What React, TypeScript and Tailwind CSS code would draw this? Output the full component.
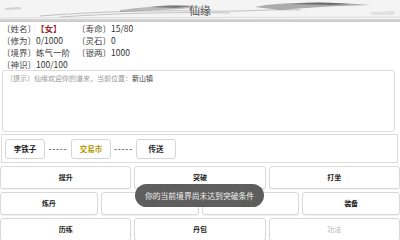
export default function App() {
  const Btn = ({ label, dim }: { label: string; dim?: boolean }) => (
    <div
      className={
        "flex items-center justify-center h-[23px] rounded-[3px] border border-[#d9d9d9] bg-white shadow-[0_1px_1px_rgba(0,0,0,0.06)] text-[7px] whitespace-nowrap " +
        (dim ? "text-[#b5b5b5]" : "font-bold text-[#222]")
      }
    >
      {label}
    </div>
  );
  const LocBtn = ({ label, gold }: { label: string; gold?: boolean }) => (
    <div
      className={
        "flex shrink-0 items-center justify-center w-[40px] h-[20px] rounded-[3px] border border-[#d6d6d6] bg-white text-[7.5px] font-bold whitespace-nowrap " +
        (gold ? "text-[#b59a00]" : "text-[#222]")
      }
    >
      {label}
    </div>
  );
  const Item = ({ k, v, red }: { k: string; v: string; red?: boolean }) => (
    <div className="flex whitespace-nowrap h-[12px] items-center">
      <span className="w-[34px] shrink-0 text-[#444]">〔{k}〕</span>
      <span className={red ? "text-[#a3262a] font-bold" : "text-[#333]"}>{v}</span>
    </div>
  );
  return (
    <div className="relative w-[400px] h-[240px] overflow-hidden bg-white font-['Noto_Sans_CJK_SC','Noto_Sans',sans-serif]">
      <div className="relative h-[19px] bg-[#f4f4f4] flex items-center justify-center overflow-hidden">
        <svg className="absolute inset-0" width="400" height="19" viewBox="0 0 400 19">
          <path d="M40 16 C 90 12, 150 10, 200 11 S 260 9, 300 10" stroke="#8a8a8a" strokeWidth="0.7" fill="none" opacity="0.7" />
          <path d="M60 17 C 120 13, 170 12, 230 13" stroke="#a0a0a0" strokeWidth="0.6" fill="none" />
          <path d="M255 7 C 270 4, 285 3, 300 3 C 320 2, 345 3, 370 5 L 340 6 C 320 7, 300 8, 280 10 Z" fill="#7a7a7a" opacity="0.6" />
          <path d="M290 4 C 310 2, 330 2, 350 4 L 330 5 Z" fill="#444" opacity="0.6" />
          <path d="M120 10 C 150 6, 175 5, 205 7 L 180 9 C 160 10, 140 11, 120 12 Z" fill="#888" opacity="0.55" />
          <path d="M150 7 C 165 5, 180 5, 195 6 L 175 8 Z" fill="#444" opacity="0.55" />
          <path d="M5 8 L 20 7 L 22 9 L 6 10 Z" fill="#bbb" opacity="0.6" />
          <path d="M370 12 L 395 11 L 394 15 L 372 15 Z" fill="#ccc" opacity="0.5" />
          <path d="M0 18 L 400 17" stroke="#ddd" strokeWidth="1" />
        </svg>
        <span className="relative text-[11px] leading-none text-[#555] mt-[1px]">仙缘</span>
      </div>
      <div className="h-[3px] bg-gradient-to-b from-[#d8d8d8] to-[#c8c8c8]" />
      <div className="grid grid-cols-[75px_1fr] pl-[2px] text-[8.5px] leading-[12px]">
        <Item k="姓名" v="【女】" red />
        <Item k="寿命" v="15/80" />
        <Item k="修为" v="0/1000" />
        <Item k="灵石" v="0" />
        <Item k="境界" v="练气一阶" />
        <Item k="银两" v="1000" />
        <Item k="神识" v="100/100" />
      </div>
      <div className="ml-[2px] mr-[5px] h-[62px] rounded-[3px] border border-[#dcdcdc] px-[3px] pt-[2px] text-[7px] leading-[10px] text-[#999] whitespace-nowrap">
        〔提示〕仙缘欢迎你的道来，当前位置：<span className="text-[#333]">新山镇</span>
      </div>
      <div className="mt-[2px] ml-[1px] mr-[2px] h-[29px] border border-[#dcdcdc] flex items-center pl-[3px]">
        <LocBtn label="李铁子" />
        <span className="w-[26px] shrink-0 text-center text-[8px] font-bold text-[#666] tracking-[0.8px]">-----</span>
        <LocBtn label="交易市" gold />
        <span className="w-[25px] shrink-0 text-center text-[8px] font-bold text-[#666] tracking-[0.8px]">-----</span>
        <LocBtn label="传送" />
      </div>
      <div className="mt-[3px] grid grid-cols-3 gap-x-[3px]">
        <Btn label="提升" />
        <Btn label="突破" />
        <Btn label="打坐" />
      </div>
      <div className="mt-[3px] grid grid-cols-4 gap-x-[3px]">
        <Btn label="炼丹" />
        <Btn label="炼器" dim />
        <Btn label="阵法" dim />
        <Btn label="装备" />
      </div>
      <div className="mt-[3px] grid grid-cols-3 gap-x-[3px]">
        <Btn label="历练" />
        <Btn label="丹包" />
        <Btn label="功法" dim />
      </div>
      <div className="absolute left-[135px] top-[184px] w-[129px] h-[23px] rounded-full bg-[#555555]/95 flex items-center justify-center text-[7.8px] text-[#f0f0f0] whitespace-nowrap">
        你的当前境界尚未达到突破条件
      </div>
    </div>
  );
}
